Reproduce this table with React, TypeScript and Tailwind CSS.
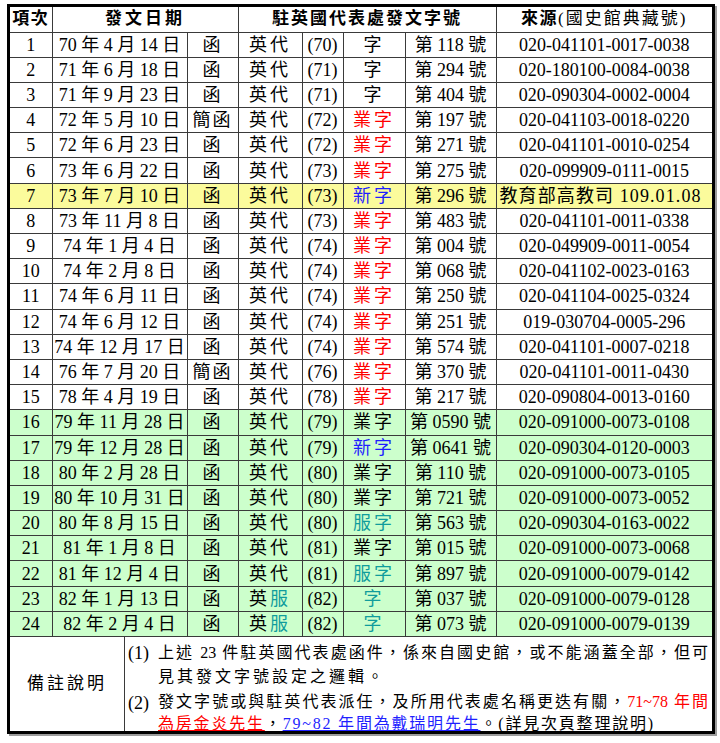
type Row = {
  no: number;
  date: string;
  kind: string;
  office: "代" | "服";
  year: string;
  word: string;
  wordColor?: string;
  num: string;
  src: string;
  bg?: string;
};

const RED = "text-[#ff0000]";
const BLUE = "text-[#1f1fff]";
const TEAL = "text-[#109c9c]";

const rows: Row[] = [
  { no: 1, date: "70 年 4 月 14 日", kind: "函", office: "代", year: "(70)", word: "字", num: "第 118 號", src: "020-041101-0017-0038" },
  { no: 2, date: "71 年 6 月 18 日", kind: "函", office: "代", year: "(71)", word: "字", num: "第 294 號", src: "020-180100-0084-0038" },
  { no: 3, date: "71 年 9 月 23 日", kind: "函", office: "代", year: "(71)", word: "字", num: "第 404 號", src: "020-090304-0002-0004" },
  { no: 4, date: "72 年 5 月 10 日", kind: "簡函", office: "代", year: "(72)", word: "業字", wordColor: RED, num: "第 197 號", src: "020-041103-0018-0220" },
  { no: 5, date: "72 年 6 月 23 日", kind: "函", office: "代", year: "(72)", word: "業字", wordColor: RED, num: "第 271 號", src: "020-041101-0010-0254" },
  { no: 6, date: "73 年 6 月 22 日", kind: "函", office: "代", year: "(73)", word: "業字", wordColor: RED, num: "第 275 號", src: "020-099909-0111-0015" },
  { no: 7, date: "73 年 7 月 10 日", kind: "函", office: "代", year: "(73)", word: "新字", wordColor: BLUE, num: "第 296 號", src: "教育部高教司 109.01.08", bg: "bg-[#fbfb9c]" },
  { no: 8, date: "73 年 11 月 8 日", kind: "函", office: "代", year: "(73)", word: "業字", wordColor: RED, num: "第 483 號", src: "020-041101-0011-0338" },
  { no: 9, date: "74 年 1 月 4 日", kind: "函", office: "代", year: "(74)", word: "業字", wordColor: RED, num: "第 004 號", src: "020-049909-0011-0054" },
  { no: 10, date: "74 年 2 月 8 日", kind: "函", office: "代", year: "(74)", word: "業字", wordColor: RED, num: "第 068 號", src: "020-041102-0023-0163" },
  { no: 11, date: "74 年 6 月 11 日", kind: "函", office: "代", year: "(74)", word: "業字", wordColor: RED, num: "第 250 號", src: "020-041104-0025-0324" },
  { no: 12, date: "74 年 6 月 12 日", kind: "函", office: "代", year: "(74)", word: "業字", wordColor: RED, num: "第 251 號", src: "019-030704-0005-296" },
  { no: 13, date: "74 年 12 月 17 日", kind: "函", office: "代", year: "(74)", word: "業字", wordColor: RED, num: "第 574 號", src: "020-041101-0007-0218" },
  { no: 14, date: "76 年 7 月 20 日", kind: "簡函", office: "代", year: "(76)", word: "業字", wordColor: RED, num: "第 370 號", src: "020-041101-0011-0430" },
  { no: 15, date: "78 年 4 月 19 日", kind: "函", office: "代", year: "(78)", word: "業字", wordColor: RED, num: "第 217 號", src: "020-090804-0013-0160" },
  { no: 16, date: "79 年 11 月 28 日", kind: "函", office: "代", year: "(79)", word: "業字", num: "第 0590 號", src: "020-091000-0073-0108", bg: "bg-[#ccffcc]" },
  { no: 17, date: "79 年 12 月 28 日", kind: "函", office: "代", year: "(79)", word: "新字", wordColor: BLUE, num: "第 0641 號", src: "020-090304-0120-0003", bg: "bg-[#ccffcc]" },
  { no: 18, date: "80 年 2 月 28 日", kind: "函", office: "代", year: "(80)", word: "業字", num: "第 110 號", src: "020-091000-0073-0105", bg: "bg-[#ccffcc]" },
  { no: 19, date: "80 年 10 月 31 日", kind: "函", office: "代", year: "(80)", word: "業字", num: "第 721 號", src: "020-091000-0073-0052", bg: "bg-[#ccffcc]" },
  { no: 20, date: "80 年 8 月 15 日", kind: "函", office: "代", year: "(80)", word: "服字", wordColor: TEAL, num: "第 563 號", src: "020-090304-0163-0022", bg: "bg-[#ccffcc]" },
  { no: 21, date: "81 年 1 月 8 日", kind: "函", office: "代", year: "(81)", word: "業字", num: "第 015 號", src: "020-091000-0073-0068", bg: "bg-[#ccffcc]" },
  { no: 22, date: "81 年 12 月 4 日", kind: "函", office: "代", year: "(81)", word: "服字", wordColor: TEAL, num: "第 897 號", src: "020-091000-0079-0142", bg: "bg-[#ccffcc]" },
  { no: 23, date: "82 年 1 月 13 日", kind: "函", office: "服", year: "(82)", word: "字", wordColor: TEAL, num: "第 037 號", src: "020-091000-0079-0128", bg: "bg-[#ccffcc]" },
  { no: 24, date: "82 年 2 月 4 日", kind: "函", office: "服", year: "(82)", word: "字", wordColor: TEAL, num: "第 073 號", src: "020-091000-0079-0139", bg: "bg-[#ccffcc]" },
];

const cell = "border-r border-b border-[#3a3a3a] p-0 text-center whitespace-nowrap";
const head = "border-r border-b border-[#3a3a3a] p-0 text-center font-bold tracking-[1.5px] text-[17px] whitespace-nowrap";

export default function App() {
  return (
    <div className="bg-white w-[720px] h-[743px] pt-[4px] pl-[7px] font-['Liberation_Serif','Noto_Sans_CJK_TC',serif] text-black">
      <div className="w-[708px] border-[3px] border-black shadow-[2px_2px_0_#9c9c9c]">
        <table className="w-[702px] table-fixed border-collapse text-[18px] leading-[24px]">
          <colgroup>
            <col className="w-[42px]" />
            <col className="w-[135px]" />
            <col className="w-[51px]" />
            <col className="w-[64px]" />
            <col className="w-[41px]" />
            <col className="w-[62px]" />
            <col className="w-[91px]" />
            <col className="w-[216px]" />
          </colgroup>
          <thead>
            <tr className="h-[25px]">
              <th className={head}>項次</th>
              <th className={head + " tracking-[3px]"} colSpan={2}>發文日期</th>
              <th className={head + " tracking-[2px]"} colSpan={4}>駐英國代表處發文字號</th>
              <th className={head + " border-r-0 font-normal"}>
                <span className="font-bold">來源</span>
                <span className="tracking-[2px]">(國史館典藏號)</span>
              </th>
            </tr>
          </thead>
          <tbody>
            {rows.map((r) => (
              <tr key={r.no} className={"h-[25.2px] " + (r.bg ?? "")}>
                <td className={cell}>{r.no}</td>
                <td className={cell}>{r.date}</td>
                <td className={cell + " tracking-[2px]"}>{r.kind}</td>
                <td className={cell + " tracking-[3px]"}>
                  英{r.office === "服" ? <span className={TEAL}>服</span> : "代"}
                </td>
                <td className={cell}>{r.year}</td>
                <td className={cell + " tracking-[3px] " + (r.wordColor ?? "")}>{r.word}</td>
                <td className={cell}>{r.num}</td>
                <td className={cell + " border-r-0" + (r.no === 7 ? " text-left pl-[3px] tracking-[1.1px]" : "")}>{r.src}</td>
              </tr>
            ))}
          </tbody>
        </table>
        <div className="flex h-[94px]">
          <div className="w-[115px] border-r border-[#3a3a3a] flex items-center justify-center text-[17px] tracking-[3px]">
            備註說明
          </div>
          <div className="flex-1 pl-[3px] pr-[4px] pt-[4px] text-[16px] leading-[24px]">
            <div className="flex">
              <span className="w-[30px] text-[18px]">(1)</span>
              <div className="flex-1">
                <div className="text-justify [text-align-last:justify]">上述 23 件駐英國代表處函件，係來自國史館，或不能涵蓋全部，但可</div>
                <div className="tracking-[3px]">見其發文字號設定之邏輯。</div>
              </div>
            </div>
            <div className="flex mt-[2px]">
              <span className="w-[30px] text-[18px]">(2)</span>
              <div className="flex-1 leading-[22px]">
                <div className="text-justify [text-align-last:justify]">
                  發文字號或與駐英代表派任，及所用代表處名稱更迭有關，<span className={RED}>71~78 年間</span>
                </div>
                <div className="tracking-[1.8px]">
                  <span className={RED + " underline"}>為房金炎先生</span>，<span className={BLUE + " underline"}>79~82 年間為戴瑞明先生</span>。(詳見次頁整理說明)
                </div>
              </div>
            </div>
          </div>
        </div>
      </div>
    </div>
  );
}
